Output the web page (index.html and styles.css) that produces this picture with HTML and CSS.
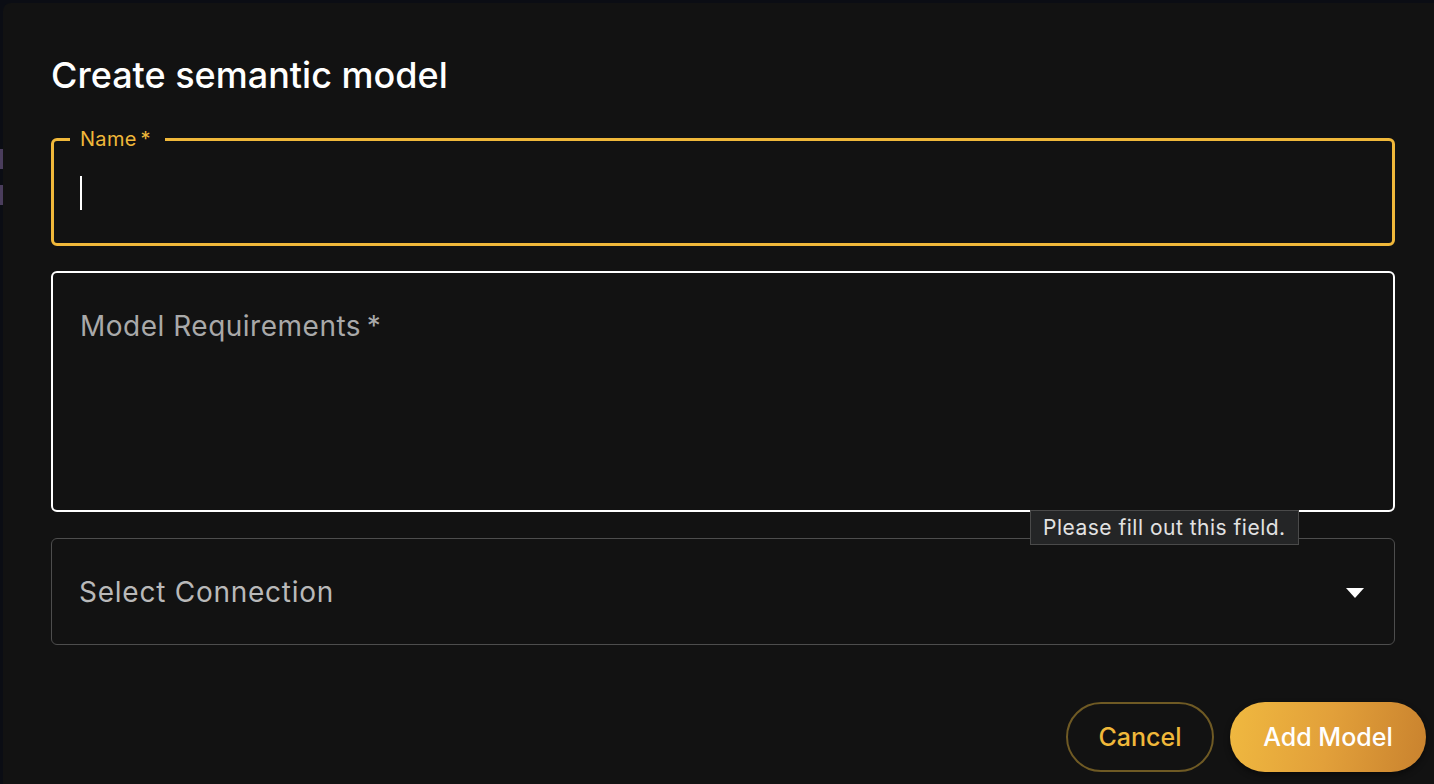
FILE: index.html
```html
<!DOCTYPE html>
<html>
<head>
<meta charset="utf-8">
<link rel="stylesheet" href="styles.css">
</head>
<body>
<div class="page">
  <div class="side">
    <span class="side-mark m1"></span>
    <span class="side-mark m2"></span>
  </div>
  <div class="dialog">
    <h1 class="title">Create semantic model</h1>
    <div class="field field-name">
      <span class="field-label">Name&thinsp;*</span>
      <span class="caret"></span>
    </div>
    <div class="field field-req">
      <span class="placeholder">Model Requirements&thinsp;*</span>
    </div>
    <div class="field-wrap">
      <div class="tooltip">Please fill out this field.</div>
      <div class="field field-select">
        <span class="placeholder select-text">Select Connection</span>
        <svg class="arrow" width="18" height="10" viewBox="0 0 18 10"><path d="M0 0 L18 0 L9 10 Z" fill="#ffffff"/></svg>
      </div>
    </div>
    <div class="actions">
      <button class="btn btn-cancel">Cancel</button>
      <button class="btn btn-add">Add Model</button>
    </div>
  </div>
</div>
</body>
</html>
```
FILE: styles.css
```css
* { box-sizing: border-box; }
html, body {
  margin: 0;
  padding: 0;
  background: #0b0d14;
  overflow: hidden;
  width: 1434px;
  height: 784px;
  font-family: Inter, "Noto Sans", sans-serif;
}
.page {
  display: flex;
  padding-top: 3px;
  height: 784px;
}
.side {
  width: 3px;
  flex: none;
  position: relative;
}
.side-mark {
  display: block;
  width: 3px;
  background: #4a3d5c;
}
.m1 { height: 20px; margin-top: 146px; }
.m2 { height: 20px; margin-top: 16px; }
.dialog {
  flex: none;
  width: 1440px;
  height: 820px;
  background: #121212;
  border-radius: 8px 0 0 0;
  padding: 52px 45px 0 48px;
  display: flex;
  flex-direction: column;
}
.title {
  margin: 0;
  font-weight: 500;
  font-size: 36px;
  line-height: 40px;
  color: #ffffff;
  letter-spacing: 0;
}
.field {
  position: relative;
  width: 1344px;
  border-radius: 6px;
}
.field-name {
  margin-top: 43px;
  height: 108px;
  border: 3px solid #f0b83a;
  display: flex;
  align-items: center;
  padding-left: 26px;
}
.field-label {
  position: absolute;
  left: 16px;
  top: -15px;
  padding: 0 14px 0 10px;
  background: #121212;
  color: #f0b83a;
  font-size: 20px;
  line-height: 26px;
  letter-spacing: 0.3px;
}
.caret {
  display: block;
  width: 2px;
  height: 34px;
  background: #ffffff;
  margin-top: 2px;
}
.field-req {
  margin-top: 25px;
  height: 241px;
  border: 2px solid #ffffff;
  padding: 36px 0 0 27px;
}
.placeholder {
  display: block;
  color: #a9a9a9;
  font-size: 28px;
  line-height: 34px;
  letter-spacing: 0.5px;
}
.field-wrap {
  position: relative;
  margin-top: 26px;
}
.field-select {
  height: 107px;
  border: 1.5px solid #4d4d4d;
  display: flex;
  align-items: center;
  justify-content: space-between;
  padding: 0 30px 0 27px;
}
.select-text { color: #b9b9b9; letter-spacing: 0.75px; }
.arrow { display: block; margin-top: 2px; }
.tooltip {
  position: absolute;
  left: 979px;
  top: -28px;
  z-index: 2;
  background: #242526;
  border: 1px solid #4a4a4a;
  color: #e2e2e2;
  font-size: 21px;
  line-height: 33px;
  letter-spacing: 0.5px;
  padding: 0 12px;
  white-space: nowrap;
}
.actions {
  margin-top: 57px;
  width: 1375px;
  display: flex;
  justify-content: flex-end;
  gap: 16px;
}
.btn {
  height: 70px;
  border-radius: 35px;
  font-family: Inter, "Noto Sans", sans-serif;
  font-size: 25px;
  font-weight: 500;
  cursor: pointer;
}
.btn-cancel {
  width: 148px;
  background: transparent;
  border: 2px solid #6f5a24;
  color: #f0b83a;
}
.btn-add {
  width: 196px;
  border: none;
  color: #ffffff;
  background: linear-gradient(100deg, #f0b940 0%, #e2a03a 50%, #c9822e 100%);
  box-shadow: 0 3px 6px rgba(0,0,0,0.45);
}
```
